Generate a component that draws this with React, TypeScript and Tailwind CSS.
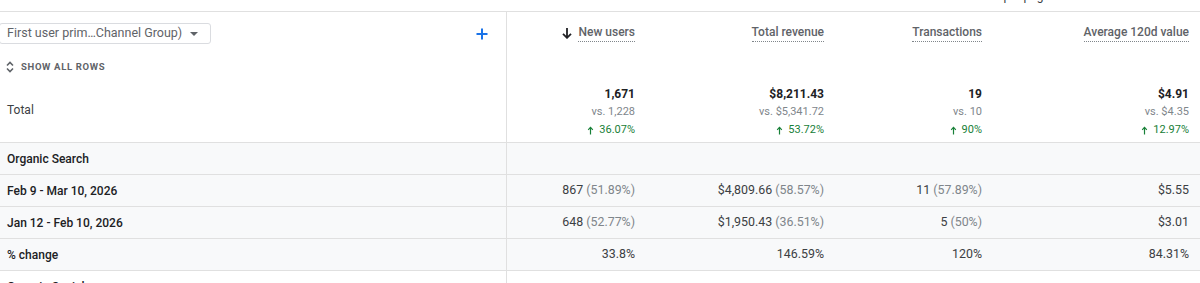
import React from "react";

const cols = [
  { key: "nu", title: "New users", w: "w-[139px]", sort: true, total: "1,671", vs: "vs. 1,228", ch: "36.07%",
    r1: ["867", "(51.89%)"], r2: ["648", "(52.77%)"], pc: "33.8%" },
  { key: "tr", title: "Total revenue", w: "w-[189px]", total: "$8,211.43", vs: "vs. $5,341.72", ch: "53.72%",
    r1: ["$4,809.66", "(58.57%)"], r2: ["$1,950.43", "(36.51%)"], pc: "146.59%" },
  { key: "tx", title: "Transactions", w: "w-[158px]", total: "19", vs: "vs. 10", ch: "90%",
    r1: ["11", "(57.89%)"], r2: ["5", "(50%)"], pc: "120%" },
  { key: "av", title: "Average 120d value", w: "flex-1", total: "$4.91", vs: "vs. $4.35", ch: "12.97%",
    r1: ["$5.55", ""], r2: ["$3.01", ""], pc: "84.31%" },
];

function UpArrow() {
  return (
    <svg width="7" height="9" viewBox="0 0 7 9" className="mr-[5px] inline-block">
      <path d="M3.5 1.5 V8.5" stroke="#188038" strokeWidth="1.2" />
      <path d="M1.2 3.8 L3.5 1.3 L5.8 3.8" stroke="#188038" strokeWidth="1.2" fill="none" />
    </svg>
  );
}

function Row({ label, cells, bg = "bg-[#f8f9fa]" }: { label: string; cells: React.ReactNode[]; bg?: string }) {
  return (
    <div className={`flex h-[32px] border-b border-[#e0e0e0] ${bg}`}>
      <div className="w-[507px] shrink-0 border-r border-[#e0e0e0] flex items-center pl-[7px] text-[12px] font-medium text-[#202124]">
        {label}
      </div>
      {cols.map((c, i) => (
        <div key={c.key} className={`${c.w} shrink-0 flex items-center justify-end pr-[11px] text-[12.4px] text-[#3c4043]`}>
          {cells[i]}
        </div>
      ))}
    </div>
  );
}

export default function App() {
  return (
    <div className="w-[1200px] h-[283px] overflow-hidden bg-white font-['Roboto',sans-serif]">
      <div className="h-[12px] border-b border-[#e0e0e0] relative overflow-hidden">
        <div className="absolute left-[971px] top-[-12px] text-[12px] text-[#3c4043] leading-[16px]">Rows per page</div>
      </div>
      {/* header */}
      <div className="flex h-[131px] border-b border-[#e0e0e0]">
        <div className="w-[507px] shrink-0 border-r border-[#e0e0e0] relative flex flex-col">
          <div className="flex items-start justify-between pt-[11px] pr-[18px]">
            <div className="ml-[-1px] w-[212px] h-[21px] border border-[#dadce0] rounded-[3px] flex items-center justify-between pl-[7px] pr-[12px]">
              <span className="text-[12.5px] text-[#5f6368] leading-none whitespace-nowrap">First user prim…Channel Group)</span>
              <svg width="8" height="4" viewBox="0 0 8 4"><path d="M0 0 L8 0 L4 4 Z" fill="#5f6368" /></svg>
            </div>
            <svg width="12" height="12" viewBox="0 0 12 12" className="mt-[5px]">
              <path d="M6 0.5 V11.5 M0.5 6 H11.5" stroke="#1a73e8" strokeWidth="2" />
            </svg>
          </div>
          <div className="flex items-center mt-[16px] pl-[6px] h-[14px]">
            <svg width="8" height="12" viewBox="0 0 8 12" className="mr-[7px]">
              <path d="M1 4.5 L4 1.5 L7 4.5 M1 7.5 L4 10.5 L7 7.5" stroke="#5f6368" strokeWidth="1.6" fill="none" />
            </svg>
            <span className="text-[9.5px] font-bold tracking-[0.07em] text-[#5f6368] leading-none">SHOW ALL ROWS</span>
          </div>
          <div className="mt-[28px] pl-[7px] text-[12px] text-[#3c4043] leading-[16px]">Total</div>
        </div>
        {cols.map((c) => (
          <div key={c.key} className={`${c.w} shrink-0 flex flex-col items-end pr-[11px]`}>
            <div className="flex items-center mt-[12px] h-[17px]">
              {c.sort && (
                <svg width="12" height="12" viewBox="0 0 12 12" className="mr-[5px]">
                  <path d="M6 1 V10.5 M2 6.8 L6 10.8 L10 6.8" stroke="#202124" strokeWidth="1.8" fill="none" />
                </svg>
              )}
              <span className="text-[12px] font-medium text-[#5f6368] leading-[16px] border-b border-dotted border-[#80868b] pb-[1px]">
                {c.title}
              </span>
            </div>
            <div className="mt-[44px] text-[12px] font-bold text-[#202124] leading-[18px]">{c.total}</div>
            <div className="text-[11px] text-[#80868b] leading-[18px]">{c.vs}</div>
            <div className="text-[11px] text-[#188038] leading-[18px] flex items-center">
              <UpArrow />
              {c.ch}
            </div>
          </div>
        ))}
      </div>
      <Row label="Organic Search" cells={cols.map(() => null)} />
      <Row
        label="Feb 9 - Mar 10, 2026"
        cells={cols.map((c) => (
          <span>
            {c.r1[0]}
            {c.r1[1] && <span className="text-[#80868b]"> {c.r1[1]}</span>}
          </span>
        ))}
      />
      <Row
        label="Jan 12 - Feb 10, 2026"
        cells={cols.map((c) => (
          <span>
            {c.r2[0]}
            {c.r2[1] && <span className="text-[#80868b]"> {c.r2[1]}</span>}
          </span>
        ))}
      />
      <Row label="% change" cells={cols.map((c) => <span>{c.pc}</span>)} />
      <Row label="Organic Social" bg="bg-white" cells={cols.map(() => null)} />
    </div>
  );
}
